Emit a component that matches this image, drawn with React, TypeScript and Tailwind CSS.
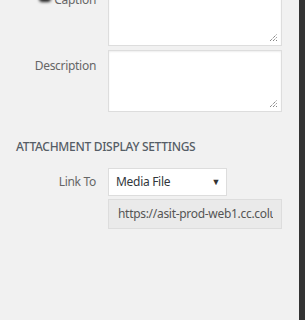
import React from "react";

const font = { fontFamily: '"Noto Sans", "Open Sans", sans-serif' };

const Grip = () => (
  <svg className="absolute right-[3px] bottom-[3px]" width="9" height="9" viewBox="0 0 9 9">
    <path d="M1 8 L8 1 M4 8 L8 4 M7 8 L8 7" stroke="#555" strokeWidth="1" strokeDasharray="1 1" />
  </svg>
);

const Label: React.FC<{ children: React.ReactNode; className?: string }> = ({ children, className }) => (
  <div className={`w-[96px] shrink-0 text-right text-[12px] tracking-[-0.3px] text-[#666] ${className ?? ""}`}>
    {children}
  </div>
);

export default function App() {
  return (
    <div className="relative flex h-[320px] w-[305px] overflow-hidden bg-[#f1f1f1]" style={font}>
      <div className="flex-1 -mt-[18px]">
        <div className="relative flex gap-3">
          <span className="absolute left-[39px] top-[13px] h-[7px] w-[12px] rounded-full bg-[#222] blur-[1.5px]" />
          <Label className="pt-[9px]">Caption</Label>
          <div className="relative h-[64px] w-[174px] border border-[#ddd] bg-white shadow-[inset_0_1px_2px_rgba(0,0,0,0.07)]">
            <Grip />
          </div>
        </div>
        <div className="mt-[4px] flex gap-3">
          <Label className="pt-[7px]">Description</Label>
          <div className="relative h-[62px] w-[174px] border border-[#ddd] bg-white shadow-[inset_0_1px_2px_rgba(0,0,0,0.07)]">
            <Grip />
          </div>
        </div>
        <div className="mt-[26px] pl-4 text-[12px] tracking-[-0.3px] font-medium text-[#555d66] uppercase">
          Attachment Display Settings
        </div>
        <div className="mt-[12px] flex items-center gap-3">
          <Label>Link To</Label>
          <div className="flex h-[28px] w-[119px] items-center justify-between border border-[#ddd] bg-white pl-[7px] pr-[6px] text-[12px] tracking-[-0.3px] text-[#32373c]">
            <span>Media File</span>
            <span className="text-[9px] text-[#333]">▼</span>
          </div>
        </div>
        <div className="mt-[3px] flex gap-3">
          <div className="w-[96px] shrink-0" />
          <div className="flex h-[30px] w-[174px] items-center border border-[#ddd] bg-[#eaeaea] pl-[9px] pr-[8px] text-[12px] tracking-[-0.3px] text-[#555]">
            <span className="overflow-hidden whitespace-nowrap">https://asit-prod-web1.cc.columbia.edu</span>
          </div>
        </div>
      </div>
      <div className="w-[6px] shrink-0 bg-[#333]" />
    </div>
  );
}
